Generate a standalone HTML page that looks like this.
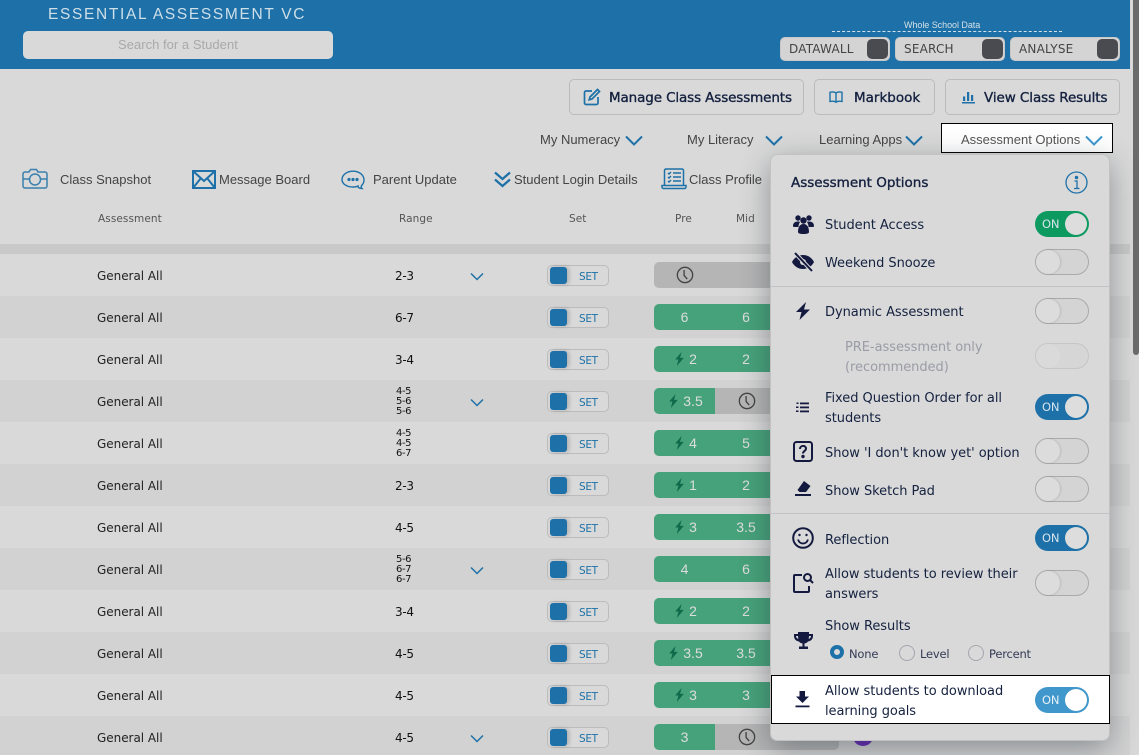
<!DOCTYPE html>
<html><head><meta charset="utf-8"><style>
html,body{margin:0;padding:0;width:1139px;height:755px;overflow:hidden;background:#d9d9d9}
body{position:relative;font-family:"DejaVu Sans",sans-serif}
.a,.t,svg{position:absolute}
.t{white-space:nowrap;line-height:20px;height:20px}
.l{font-family:"Liberation Sans",sans-serif;font-size:13px;color:#444}
.row{position:absolute;left:0;width:1130px;height:42px;background:#d9d9d9}
.row.e{background:#d2d2d2}
.ga{position:absolute;left:97px;top:11.500px;font-size:12px;letter-spacing:-.03px;line-height:20px;color:#222;white-space:nowrap}
.rg{position:absolute;left:395px;top:11.500px;font-size:12px;letter-spacing:-.3px;line-height:20px;color:#111}
.rs{position:absolute;left:396px;top:7px;font-size:10px;letter-spacing:-.4px;line-height:10px;color:#111;text-align:center;width:15px;white-space:nowrap}
.sw{position:absolute;left:547px;top:11px;width:60px;height:19px;border:1px solid #bcbcbc;border-radius:5px;background:#d9d9d9}
.sw i{position:absolute;left:2px;top:1px;width:17px;height:17px;background:#1d71a8;border-radius:3px;box-shadow:2px 0 4px rgba(0,0,0,.2)}
.sw b{position:absolute;left:31px;top:3px;font-weight:normal;font-size:10.5px;letter-spacing:-.35px;line-height:16px;color:#1d71a8}
.bar{position:absolute;left:654px;top:8px;width:185px;height:26px;border-radius:5px;overflow:hidden;background:#b5b5b5}
.c{position:absolute;top:0;height:26px;width:62px;background:#46a27a;color:#ddd;font-family:"Liberation Sans",sans-serif;font-size:14px;line-height:26px;text-align:center;box-sizing:border-box}
.c1{left:0;width:61px}.c2{left:61px}.c3{left:123px}
.d{padding-left:17px}
.chev{position:absolute;left:470px;top:18px}
.bt{position:absolute;top:79px;height:34px;border:1px solid #bbb;border-radius:5px;background:#d9d9d9}
.bt span{position:absolute;top:9px;font-size:13.500px;line-height:18px;color:#14213f;white-space:nowrap;-webkit-text-stroke:.35px #14213f}
.tb{position:absolute;top:37px;width:110px;height:24px;background:#d4d4d4;border:1px solid #c8c8c8;border-radius:5px;box-sizing:border-box}
.tb span{position:absolute;left:8px;top:3px;font-size:12px;letter-spacing:.2px;line-height:17px;color:#444}
.tb i{position:absolute;right:1px;top:1px;width:21px;height:20px;border-radius:5px;background:#4a4b50}
.th{position:absolute;top:210px;font-size:10.500px;letter-spacing:.08px;line-height:18px;color:#555}
.o{left:825px;font-size:13px;color:#14213f;letter-spacing:-.05px;margin-top:2px}
.sw2{position:absolute;left:1035px;width:54px;height:26px;border-radius:13px;box-sizing:border-box;border:1px solid #aaa;background:#d4d4d4}
.sw2 i{position:absolute;left:0;top:0;width:24px;height:24px;border-radius:12px;background:#dcdcdc;box-shadow:1px 0 2px rgba(0,0,0,.12)}
.on{border:0;background:#1d71a8}
.on i{left:30px;top:2px;width:22px;height:22px;border-radius:11px;background:#ddd;box-shadow:none}
.on b{position:absolute;left:7px;top:4px;font-weight:normal;font-size:11.500px;line-height:18px;color:#d5e3ec;letter-spacing:-.2px}
.hr{position:absolute;left:771px;width:338px;height:1px;background:#c2c2c6}
.ic{fill:#14193f;stroke:none}
.rad{position:absolute;top:645px;width:14px;height:14px;border:1px solid #a5a5ad;border-radius:50%;box-sizing:content-box}
.rl{top:644px;font-size:11.500px;letter-spacing:-.2px;color:#333a55}
</style></head><body>

<!-- header -->
<div class="a" style="left:0;top:0;width:1130px;height:69px;background:#1d71a8"></div>
<div class="t" style="left:48px;top:5px;font-size:15.500px;letter-spacing:1.67px;color:#cfdfe8;font-family:'Liberation Sans',sans-serif">ESSENTIAL ASSESSMENT VC</div>
<div class="a" style="left:23px;top:31px;width:310px;height:28px;border-radius:5px;background:#d9d9d9"></div>
<div class="t l" style="left:118px;top:35px;font-size:13px;color:#a9a9a9;letter-spacing:.03px">Search for a Student</div>
<div class="t" style="left:904px;top:15px;font-size:9px;letter-spacing:-.05px;color:#d3e0e8;font-family:'Liberation Sans',sans-serif">Whole School Data</div>
<div class="a" style="left:832px;top:31px;width:230px;border-top:1px dashed #d3e0e8"></div>
<div class="tb" style="left:780px"><span>DATAWALL</span><i></i></div>
<div class="tb" style="left:895px"><span>SEARCH</span><i></i></div>
<div class="tb" style="left:1010px"><span>ANALYSE</span><i></i></div>

<!-- buttons -->
<div class="bt" style="left:569px;width:233px"><svg style="left:13px;top:8px" width="18" height="18" viewBox="0 0 18 18" fill="none" stroke="#1d71a8" stroke-width="1.7"><path d="M9 3H3a1.500 1.500 0 0 0-1.500 1.500V15A1.500 1.500 0 0 0 3 16.500h10.500A1.500 1.500 0 0 0 15 15V9"/><path d="M14.500 1.500l2 2L9 11l-2.800.8L7 9z"/></svg><span style="left:39px;letter-spacing:-.12px">Manage Class Assessments</span></div>
<div class="bt" style="left:814px;width:119px"><svg style="left:14px;top:10px" width="14" height="14" viewBox="0 0 14 14" fill="none" stroke="#1d71a8" stroke-width="1.4"><path d="M7 3C5.500 1.800 3 1.800 1 2.300V11.500c2-.5 4.500-.5 6 .7 1.500-1.200 4-1.200 6-.7V2.300C11 1.800 8.500 1.800 7 3zM7 3v9"/></svg><span style="left:39px">Markbook</span></div>
<div class="bt" style="left:945px;width:173px"><svg style="left:15px;top:10px" width="14" height="14" viewBox="0 0 14 14" fill="#1d71a8"><rect x="1" y="12" width="13" height="1.500"/><rect x="2" y="6.500" width="2.200" height="4.500"/><rect x="6" y="2" width="2.200" height="9"/><rect x="10" y="5" width="2.200" height="6"/></svg><span style="left:38px;letter-spacing:-.08px">View Class Results</span></div>

<!-- nav -->
<div class="t l" style="left:540px;top:130px">My Numeracy</div>
<svg style="left:625px;top:135px" width="18" height="11" viewBox="0 0 18 11" fill="none" stroke="#1d71a8" stroke-width="2"><path d="M1 1.500l8 8 8-8"/></svg>
<div class="t l" style="left:687px;top:130px">My Literacy</div>
<svg style="left:765px;top:135px" width="18" height="11" viewBox="0 0 18 11" fill="none" stroke="#1d71a8" stroke-width="2"><path d="M1 1.500l8 8 8-8"/></svg>
<div class="t l" style="left:819px;top:130px">Learning Apps</div>
<svg style="left:905px;top:135px" width="18" height="11" viewBox="0 0 18 11" fill="none" stroke="#1d71a8" stroke-width="2"><path d="M1 1.500l8 8 8-8"/></svg>
<div class="a" style="left:941px;top:123px;width:170px;height:28px;background:#fff;border:1.500px solid #000"></div>
<div class="t l" style="left:961px;top:130px;color:#555">Assessment Options</div>
<svg style="left:1085px;top:135px" width="18" height="11" viewBox="0 0 18 11" fill="none" stroke="#3d97cf" stroke-width="2"><path d="M1 1.500l8 8 8-8"/></svg>

<!-- toolbar -->
<svg style="left:22px;top:168px" width="26" height="21" viewBox="0 0 26 21" fill="none" stroke="#3a80ad" stroke-width="1.500"><path d="M3 4h4l1.500-2.500h6L16 4h7a2 2 0 0 1 2 2v12a2 2 0 0 1-2 2H3a2 2 0 0 1-2-2V6a2 2 0 0 1 2-2zM1 11h6M19 11h6"/><circle cx="13" cy="11.500" r="5.500"/></svg>
<div class="t l" style="left:60px;top:170px">Class Snapshot</div>
<svg style="left:192px;top:170px" width="24" height="19" viewBox="0 0 24 19" fill="none" stroke="#1d71a8" stroke-width="2"><rect x="1" y="1" width="22" height="17"/><path d="M1 1l11 10L23 1M1 18l8-10M23 18l-8-10"/></svg>
<div class="t l" style="left:219px;top:170px">Message Board</div>
<svg style="left:341px;top:170px" width="24" height="20" viewBox="0 0 24 20" fill="none" stroke="#1d71a8" stroke-width="1.400"><path d="M21 15c1.500-1.500 2-3.200 2-5 0-5-4.800-8.800-11-8.800S1 5 1 9.500 6 17 12 17c2 0 4-.4 5-1 0 1.500 1.500 2.500 4 2.500-1-1-1-2.300 0-3.500z"/><circle cx="8" cy="9.500" r=".9" fill="#1d71a8"/><circle cx="12" cy="9.500" r=".9" fill="#1d71a8"/><circle cx="16" cy="9.500" r=".9" fill="#1d71a8"/></svg>
<div class="t l" style="left:373px;top:170px">Parent Update</div>
<svg style="left:494px;top:171px" width="17" height="17" viewBox="0 0 17 17" fill="none" stroke="#1d71a8" stroke-width="2.200"><path d="M1 1.500l7.500 6.500L16 1.500M1 8.500l7.500 6.500L16 8.500"/></svg>
<div class="t l" style="left:514px;top:170px">Student Login Details</div>
<svg style="left:661px;top:168px" width="26" height="22" viewBox="0 0 26 22" fill="none" stroke="#1d71a8" stroke-width="1.500"><path d="M3.500 17V2.500a1.500 1.500 0 0 1 1.500-1.500h16a1.500 1.500 0 0 1 1.500 1.500V17M1 17.500h24V19a1.500 1.500 0 0 1-1.500 1.500h-21A1.500 1.500 0 0 1 1 19zM12 5h8M12 9h8M12 13h8M7 5l1 1 2-2M7 9l1 1 2-2M7 13l1 1 2-2"/></svg>
<div class="t l" style="left:689px;top:170px">Class Profile</div>

<!-- table head -->
<div class="th" style="left:98px">Assessment</div>
<div class="th" style="left:399px">Range</div>
<div class="th" style="left:569px">Set</div>
<div class="th" style="left:675px">Pre</div>
<div class="th" style="left:736px">Mid</div>
<div class="a" style="left:0;top:244px;width:1130px;height:10px;background:#c9c9c9"></div>

<!-- rows -->
<svg width="0" height="0" style="position:absolute"><defs>
<symbol id="bolt" viewBox="0 0 10 13"><path d="M7 0L1 7h3L2.500 13 9 5.500H5.500z" fill="#0f6a4b"/></symbol>
<symbol id="clk" viewBox="0 0 20 20"><circle cx="10" cy="10" r="8.500" fill="none" stroke="#444" stroke-width="1.500"/><path d="M9 4.500V10.500l3.500 4" fill="none" stroke="#444" stroke-width="1.500"/></symbol>
<symbol id="chv" viewBox="0 0 14 9"><path d="M1 1.500l6 6 6-6" fill="none" stroke="#1d71a8" stroke-width="1.500"/></symbol>
</defs></svg>

<div class="row" style="top:254px"><span class="ga">General All</span><span class="rg">2-3</span><svg class="chev" width="14" height="9"><use href="#chv"/></svg><div class="sw"><i></i><b>SET</b></div><div class="bar"><svg style="left:22px;top:4px" width="18" height="18"><use href="#clk"/></svg></div></div>
<div class="row e" style="top:296px"><span class="ga">General All</span><span class="rg">6-7</span><div class="sw"><i></i><b>SET</b></div><div class="bar"><div class="c c1">6</div><div class="c c2">6</div><div class="c c3"></div></div></div>
<div class="row" style="top:338px"><span class="ga">General All</span><span class="rg">3-4</span><div class="sw"><i></i><b>SET</b></div><div class="bar"><div class="c c1 d">2<svg style="left:20px;top:6px" width="11" height="14"><use href="#bolt"/></svg></div><div class="c c2">2</div><div class="c c3"></div></div></div>
<div class="row e" style="top:380px"><span class="ga">General All</span><div class="rs">4-5<br>5-6<br>5-6</div><svg class="chev" width="14" height="9"><use href="#chv"/></svg><div class="sw"><i></i><b>SET</b></div><div class="bar"><div class="c c1 d">3.5<svg style="left:14px;top:6px" width="11" height="14"><use href="#bolt"/></svg></div><svg style="left:84px;top:4px" width="18" height="18"><use href="#clk"/></svg></div></div>
<div class="row" style="top:422px"><span class="ga">General All</span><div class="rs">4-5<br>4-5<br>6-7</div><div class="sw"><i></i><b>SET</b></div><div class="bar"><div class="c c1 d">4<svg style="left:20px;top:6px" width="11" height="14"><use href="#bolt"/></svg></div><div class="c c2">5</div><div class="c c3"></div></div></div>
<div class="row e" style="top:464px"><span class="ga">General All</span><span class="rg">2-3</span><div class="sw"><i></i><b>SET</b></div><div class="bar"><div class="c c1 d">1<svg style="left:20px;top:6px" width="11" height="14"><use href="#bolt"/></svg></div><div class="c c2">2</div><div class="c c3"></div></div></div>
<div class="row" style="top:506px"><span class="ga">General All</span><span class="rg">4-5</span><div class="sw"><i></i><b>SET</b></div><div class="bar"><div class="c c1 d">3<svg style="left:20px;top:6px" width="11" height="14"><use href="#bolt"/></svg></div><div class="c c2">3.5</div><div class="c c3"></div></div></div>
<div class="row e" style="top:548px"><span class="ga">General All</span><div class="rs">5-6<br>6-7<br>6-7</div><svg class="chev" width="14" height="9"><use href="#chv"/></svg><div class="sw"><i></i><b>SET</b></div><div class="bar"><div class="c c1">4</div><div class="c c2">6</div><div class="c c3"></div></div></div>
<div class="row" style="top:590px"><span class="ga">General All</span><span class="rg">3-4</span><div class="sw"><i></i><b>SET</b></div><div class="bar"><div class="c c1 d">2<svg style="left:20px;top:6px" width="11" height="14"><use href="#bolt"/></svg></div><div class="c c2">2</div><div class="c c3"></div></div></div>
<div class="row e" style="top:632px"><span class="ga">General All</span><span class="rg">4-5</span><div class="sw"><i></i><b>SET</b></div><div class="bar"><div class="c c1 d">3.5<svg style="left:14px;top:6px" width="11" height="14"><use href="#bolt"/></svg></div><div class="c c2">3.5</div><div class="c c3"></div></div></div>
<div class="row" style="top:674px"><span class="ga">General All</span><span class="rg">4-5</span><div class="sw"><i></i><b>SET</b></div><div class="bar"><div class="c c1 d">3<svg style="left:20px;top:6px" width="11" height="14"><use href="#bolt"/></svg></div><div class="c c2">3</div><div class="c c3"></div></div></div>
<div class="row e" style="top:716px;height:39px"><span class="ga">General All</span><span class="rg">4-5</span><svg class="chev" width="14" height="9"><use href="#chv"/></svg><div class="sw"><i></i><b>SET</b></div><div class="bar"><div class="c c1">3</div><svg style="left:84px;top:4px" width="18" height="18"><use href="#clk"/></svg></div><div class="a" style="left:853px;top:11px;width:20px;height:19px;border-radius:50%;background:#6428b8"></div></div>

<!-- scrollbar -->
<div class="a" style="left:1130px;top:0;width:9px;height:755px;background:#d9d9d9"></div>
<div class="a" style="left:1133px;top:0;width:6px;height:355px;background:#6b6b6b;border-radius:0 0 3px 3px"></div>

<!-- panel -->
<div class="a" style="left:771px;top:155px;width:338px;height:585px;background:#d9d9d9;border-radius:6px;box-shadow:0 8px 30px rgba(40,50,60,.45);outline:1px solid #c2c2c2"></div>
<div class="t" style="left:791px;top:173px;margin-top:0;font-size:13.500px;color:#14213f;-webkit-text-stroke:.35px #14213f;height:20px;transform:translateY(0);padding-top:0;line-height:20px;top:173px;position:absolute"><span style="position:relative;top:0">Assessment Options</span></div>
<svg style="left:1065px;top:171px" width="23" height="23" viewBox="0 0 23 23" fill="none" stroke="#1d71a8" stroke-width="1.300"><circle cx="11.500" cy="11.500" r="10.500"/><path d="M9.500 10h2.500v7M9 17.500h5.500"/><circle cx="11.500" cy="6.500" r="1.100" fill="#1d71a8"/></svg>

<svg class="ic" style="left:793px;top:214px" width="21" height="20" viewBox="0 0 21 20"><circle cx="5" cy="4" r="2.700"/><circle cx="16" cy="4" r="2.700"/><circle cx="10.500" cy="6.500" r="3.200"/><path d="M0 12c0-3 2-4.500 5-4.500 1 0 1.800.2 2 .5-1 1.500-1.500 3-1.500 5H1c-.6 0-1-.4-1-1zM21 12c0-3-2-4.500-5-4.500-1 0-1.800.2-2 .5 1 1.500 1.500 3 1.500 5H20c.6 0 1-.4 1-1zM5 18c0-5 2-8 5.500-8S16 13 16 18c0 1.300-2 2-5.500 2S5 19.300 5 18z"/></svg>
<div class="t o" style="top:214px">Student Access</div>
<div class="sw2 on" style="top:211px;background:#0d9a60"><b>ON</b><i></i></div>

<svg class="ic" style="left:792px;top:252px" width="22" height="20" viewBox="0 0 22 20"><path d="M11 3C6 3 2 6 0 10c2 4 6 7 11 7s9-3 11-7c-2-4-6-7-11-7z"/><circle cx="11" cy="10" r="3" fill="#d9d9d9"/><path d="M3 1l17 18" stroke="#d9d9d9" stroke-width="4"/><path d="M3 1l17 18" stroke="#14193f" stroke-width="2"/></svg>
<div class="t o" style="top:252px">Weekend Snooze</div>
<div class="sw2" style="top:249px"><i></i></div>
<div class="hr" style="top:286px"></div>

<svg class="ic" style="left:796px;top:302px" width="14" height="18" viewBox="0 0 14 18"><path d="M10 0L0 10h5.500L3.500 18 14 7.500H8z"/></svg>
<div class="t o" style="top:301px">Dynamic Assessment</div>
<div class="sw2" style="top:298px"><i></i></div>
<div class="t o" style="left:845px;top:336px;color:#9a9ca6">PRE-assessment only</div>
<div class="t o" style="left:845px;top:356px;color:#9a9ca6">(recommended)</div>
<div class="sw2" style="top:343px;border-color:#c6c6c6;background:#d6d6d6"><i style="background:#dadada;box-shadow:none"></i></div>

<svg class="ic" style="left:796px;top:402px" width="13" height="11" viewBox="0 0 13 11"><rect x="4" y="0.500" width="9" height="1.800"/><rect x="4" y="4.500" width="9" height="1.800"/><rect x="4" y="8.500" width="9" height="1.800"/><rect x="0.500" y="0.500" width="2" height="1.500"/><rect x="0" y="4.500" width="2.500" height="1.500"/><rect x="0" y="8.500" width="2.500" height="1.500"/></svg>
<div class="t o" style="top:387px">Fixed Question Order for all</div>
<div class="t o" style="top:407px">students</div>
<div class="sw2 on" style="top:394px"><b>ON</b><i></i></div>

<svg style="left:793px;top:441px" width="20" height="21" viewBox="0 0 20 21" fill="none" stroke="#14193f" stroke-width="2"><rect x="1" y="1" width="18" height="19" rx="2.500"/><path d="M7 8c0-4 6-4 6-.5 0 2.500-3 2.500-3 5" /><circle cx="10" cy="15.500" r=".7" fill="#14193f"/></svg>
<div class="t o" style="top:442px;letter-spacing:-.05px">Show 'I don't know yet' option</div>
<div class="sw2" style="top:438px"><i></i></div>

<svg class="ic" style="left:795px;top:481px" width="17" height="16" viewBox="0 0 17 16"><path d="M9 0l6.500 5L11 11H4.500L2.500 9z"/><rect x="0" y="13" width="16" height="2"/></svg>
<div class="t o" style="top:480px">Show Sketch Pad</div>
<div class="sw2" style="top:476px"><i></i></div>
<div class="hr" style="top:513px"></div>

<svg style="left:792px;top:527px" width="22" height="22" viewBox="0 0 22 22" fill="none" stroke="#14193f" stroke-width="2"><circle cx="11" cy="11" r="9.800"/><path d="M6 12.500c1 3 3 4 5 4s4-1 5-4" stroke-width="1.800"/><circle cx="7.500" cy="8" r="1.200" fill="#14193f" stroke="none"/><circle cx="14.500" cy="8" r="1.200" fill="#14193f" stroke="none"/></svg>
<div class="t o" style="top:529px">Reflection</div>
<div class="sw2 on" style="top:525px"><b>ON</b><i></i></div>

<svg style="left:793px;top:572px" width="21" height="22" viewBox="0 0 21 22" fill="none" stroke="#14193f" stroke-width="2"><path d="M9 3H2a1 1 0 0 0-1 1v15a1 1 0 0 0 1 1h13a1 1 0 0 0 1-1v-5"/><circle cx="14.500" cy="5.500" r="3.500"/><path d="M17 8l3 3"/></svg>
<div class="t o" style="top:563px">Allow students to review their</div>
<div class="t o" style="top:583px">answers</div>
<div class="sw2" style="top:570px"><i></i></div>

<svg class="ic" style="left:794px;top:632px" width="19" height="18" viewBox="0 0 19 18"><path d="M4 0h11v2h4v2c0 3-2 5-5 5.500-.7 1-1.500 1.500-3.500 2V14.500H14V17H5v-2.500h3.500v-3c-2-.5-2.800-1-3.500-2C2 9 0 7 0 4V2h4zM2 4c0 1.500 1 2.500 2.300 3L4 4zM17 4h-2l-.3 3c1.300-.5 2.300-1.500 2.300-3z"/></svg>
<div class="t o" style="top:615px">Show Results</div>
<div class="rad" style="left:830px;top:645px;width:6px;height:6px;border:4px solid #1d71a8;background:#d9d9d9"></div>
<div class="t rl" style="left:849px">None</div>
<div class="rad" style="left:899px;top:645px"></div>
<div class="t rl" style="left:920px">Level</div>
<div class="rad" style="left:968px;top:645px"></div>
<div class="t rl" style="left:989px">Percent</div>

<div class="a" style="left:771px;top:675px;width:337px;height:47px;background:#fff;border:1.500px solid #000"></div>
<svg class="ic" style="left:795px;top:691px" width="15" height="17" viewBox="0 0 15 17"><path d="M4.500 0h5.500v5.500h4L7.500 12 1 5.500h3.500z"/><rect x="0.500" y="14.500" width="14" height="1.800"/></svg>
<div class="t o" style="top:680px">Allow students to download</div>
<div class="t o" style="top:700px">learning goals</div>
<div class="sw2 on" style="top:687px;background:#4097cc"><b style="color:#e6f1f8">ON</b><i style="background:#fff"></i></div>
</body></html>
